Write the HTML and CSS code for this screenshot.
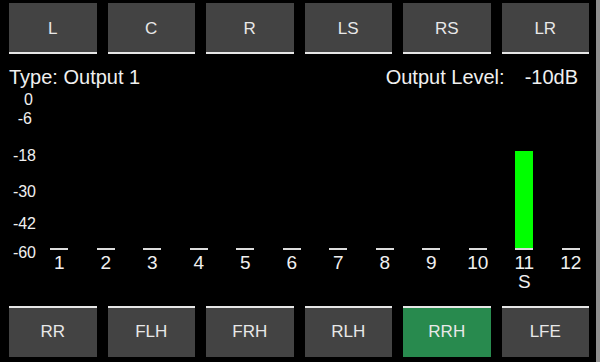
FILE: index.html
```html
<!DOCTYPE html>
<html>
    <head>
        <meta charset="utf-8">
        <title>Output Meter</title>
        <link rel="stylesheet" href="styles.css">
    </head>
    <body>
        <div class="screen">
            <div class="btn-row top">
                <div class="btn">L</div>
                <div class="btn">C</div>
                <div class="btn">R</div>
                <div class="btn">LS</div>
                <div class="btn">RS</div>
                <div class="btn">LR</div>
            </div>
            <div class="info">
                <span>Type: Output 1</span>
                <span class="level"><span>Output Level:</span><span>-10dB</span></span>
            </div>
            <div class="meter">
                <div class="scale">
                    <span class="tick t0">0</span>
                    <span class="tick t6">-6</span>
                    <span class="tick t18">-18</span>
                    <span class="tick t30">-30</span>
                    <span class="tick t42">-42</span>
                    <span class="tick t60">-60</span>
                </div>
                <div class="channels">
                    <div class="ch"><div class="bar-area"></div><div class="dash"></div><div class="num">1</div></div>
                    <div class="ch"><div class="bar-area"></div><div class="dash"></div><div class="num">2</div></div>
                    <div class="ch"><div class="bar-area"></div><div class="dash"></div><div class="num">3</div></div>
                    <div class="ch"><div class="bar-area"></div><div class="dash"></div><div class="num">4</div></div>
                    <div class="ch"><div class="bar-area"></div><div class="dash"></div><div class="num">5</div></div>
                    <div class="ch"><div class="bar-area"></div><div class="dash"></div><div class="num">6</div></div>
                    <div class="ch"><div class="bar-area"></div><div class="dash"></div><div class="num">7</div></div>
                    <div class="ch"><div class="bar-area"></div><div class="dash"></div><div class="num">8</div></div>
                    <div class="ch"><div class="bar-area"></div><div class="dash"></div><div class="num">9</div></div>
                    <div class="ch"><div class="bar-area"></div><div class="dash"></div><div class="num">10</div></div>
                    <div class="ch"><div class="bar-area"><div class="bar" style="height:97px"></div></div><div class="dash"></div><div class="num">11</div><div class="num">S</div></div>
                    <div class="ch"><div class="bar-area"></div><div class="dash"></div><div class="num">12</div></div>
                </div>
            </div>
            <div class="btn-row bottom">
                <div class="btn">RR</div>
                <div class="btn">FLH</div>
                <div class="btn">FRH</div>
                <div class="btn">RLH</div>
                <div class="btn active">RRH</div>
                <div class="btn">LFE</div>
            </div>
        </div>
    </body>
</html>
```

FILE: styles.css
```css
html, body {
    margin: 0;
    padding: 0;
    background: #000;
}
body {
    font-family: "Liberation Sans", Arial, sans-serif;
    color: #f0f0f0;
    overflow: hidden;
}
.screen {
    width: 596px;
    height: 362px;
    border-right: 4px solid #8f8f8f;
    display: flex;
    flex-direction: column;
}
.btn-row {
    display: flex;
    gap: 11px;
    padding: 0 7px 0 9px;
}
.btn-row.top {
    padding-top: 3px;
}
.btn {
    flex: 1;
    height: 51px;
    box-sizing: border-box;
    background: #434343;
    color: #e8e8e8;
    font-size: 17px;
    display: flex;
    align-items: center;
    justify-content: center;
}
.top .btn {
    border-bottom: 2px solid #e6e6e6;
    padding-top: 2px;
}
.bottom .btn {
    border-top: 2px solid #e6e6e6;
    padding-bottom: 2px;
}
.btn.active {
    background: #288a4e;
}
.info {
    display: flex;
    justify-content: space-between;
    font-size: 20px;
    line-height: 22px;
    margin-top: 12px;
    padding: 0 18px 0 9px;
}
.level {
    display: flex;
    gap: 20px;
}
.meter {
    position: relative;
    height: 218px;
}
.scale {
    position: absolute;
    left: 0;
    top: 0;
    width: 36px;
    height: 100%;
    font-size: 16px;
    line-height: 18px;
}
.tick {
    position: absolute;
    right: 0;
}
.t0 { top: 3px; right: 3px; }
.t6 { top: 22px; right: 4px; }
.t18 { top: 59px; }
.t30 { top: 95px; }
.t42 { top: 127px; }
.t60 { top: 156px; }
.channels {
    display: flex;
    margin-left: 36px;
    margin-right: 2px;
    height: 100%;
}
.ch {
    flex: 1;
    display: flex;
    flex-direction: column;
    align-items: center;
}
.bar-area {
    height: 160px;
    width: 18px;
    display: flex;
    flex-direction: column;
    justify-content: flex-end;
}
.bar {
    background: #00ff00;
}
.dash {
    width: 18px;
    height: 2px;
    background: #dcdcdc;
}
.num {
    font-size: 19px;
    line-height: 19px;
}
.dash + .num {
    margin-top: 3px;
}
```
